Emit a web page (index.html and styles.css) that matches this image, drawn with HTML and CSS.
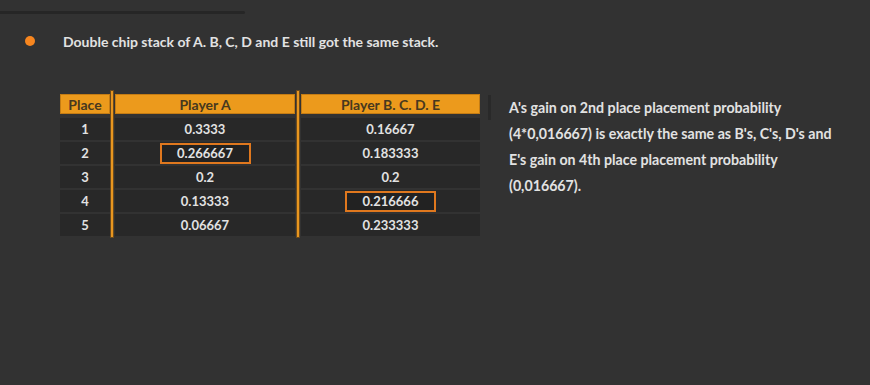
FILE: index.html
```html
<!DOCTYPE html>
<html>
<head>
<meta charset="utf-8">
<link rel="stylesheet" href="styles.css">
</head>
<body>
<div class="topbar"></div>
<div class="bullet-row">
  <span class="dot"></span>
  <span class="bullet-text">Double chip stack of A. B, C, D and E still got the same stack.</span>
</div>
<div class="main">
  <div class="table">
    <div class="divider d1"></div>
    <div class="divider d2"></div>
    <div class="hd place">Place</div>
    <div class="hd">Player A</div>
    <div class="hd">Player B. C. D. E</div>

    <div class="cell place">1</div><div class="cell">0.3333</div><div class="cell">0.16667</div>
    <div class="cell place">2</div><div class="cell"><span class="mark">0.266667</span></div><div class="cell">0.183333</div>
    <div class="cell place">3</div><div class="cell">0.2</div><div class="cell">0.2</div>
    <div class="cell place">4</div><div class="cell">0.13333</div><div class="cell"><span class="mark">0.216666</span></div>
    <div class="cell place">5</div><div class="cell">0.06667</div><div class="cell">0.233333</div>
  </div>
  <div class="sep"></div>
  <p class="note">A's gain on 2nd place placement probability (4*0,016667) is exactly the same as B's, C's, D's and E's gain on 4th place placement probability (0,016667).</p>
</div>
</body>
</html>
```
FILE: styles.css
```css
html, body {
  margin: 0;
  padding: 0;
  background: #323232;
  height: 100%;
}
body {
  font-family: "Lato", "Noto Sans", sans-serif;
  font-weight: 700;
  color: #e2e2e2;
  overflow: hidden;
}
.topbar {
  width: 245px;
  height: 3px;
  margin-top: 11px;
  background: #262626;
  border-radius: 0 2px 2px 0;
}
.bullet-row {
  display: flex;
  align-items: center;
  height: 20px;
  margin-top: 17px;
}
.dot {
  width: 10px;
  height: 10px;
  border-radius: 50%;
  background: #f7861f;
  margin-left: 25px;
  margin-right: 28px;
}
.bullet-text {
  font-size: 14px;
}
.main {
  display: flex;
  align-items: flex-start;
  margin-top: 43px;
  padding-left: 60px;
}
.table {
  display: grid;
  grid-template-columns: 50px 5px 180px 6px 179px;
  grid-template-rows: 22px repeat(5, 22px);
  row-gap: 2px;
  font-size: 13px;
  text-align: center;
}
.hd {
  background: #ec9a1c;
  color: #47381f;
  font-size: 14px;
  display: flex;
  align-items: center;
  justify-content: center;
  box-shadow: inset 0 0 0 1px #c47c14;
  margin-bottom: 2px;
}
.divider {
  grid-row: 1 / -1;
  margin: -3px 0 -1px 0;
  position: relative;
}
.d1 { grid-column: 2; }
.d2 { grid-column: 4; }
.divider::after {
  content: "";
  position: absolute;
  top: 0;
  bottom: 0;
  left: 1px;
  width: 2px;
  background: #e8961f;
  box-shadow: 0 0 0 1px #6a4a1e;
}
.d2::after { left: 2px; }
.cell {
  background: #282828;
  display: flex;
  align-items: center;
  justify-content: center;
  color: #e2e2e2;
}
.mark {
  display: inline-flex;
  align-items: center;
  justify-content: center;
  width: 87px;
  height: 17px;
  border: 2px solid #e0781e;
  background: #222;
}
.sep {
  width: 3px;
  height: 25px;
  background: #292929;
  margin-left: 8px;
  margin-top: 1px;
}
.note {
  margin: 0 0 0 18px;
  width: 330px;
  font-size: 14.2px;
  line-height: 26px;
  margin-top: 1px;
}
```
